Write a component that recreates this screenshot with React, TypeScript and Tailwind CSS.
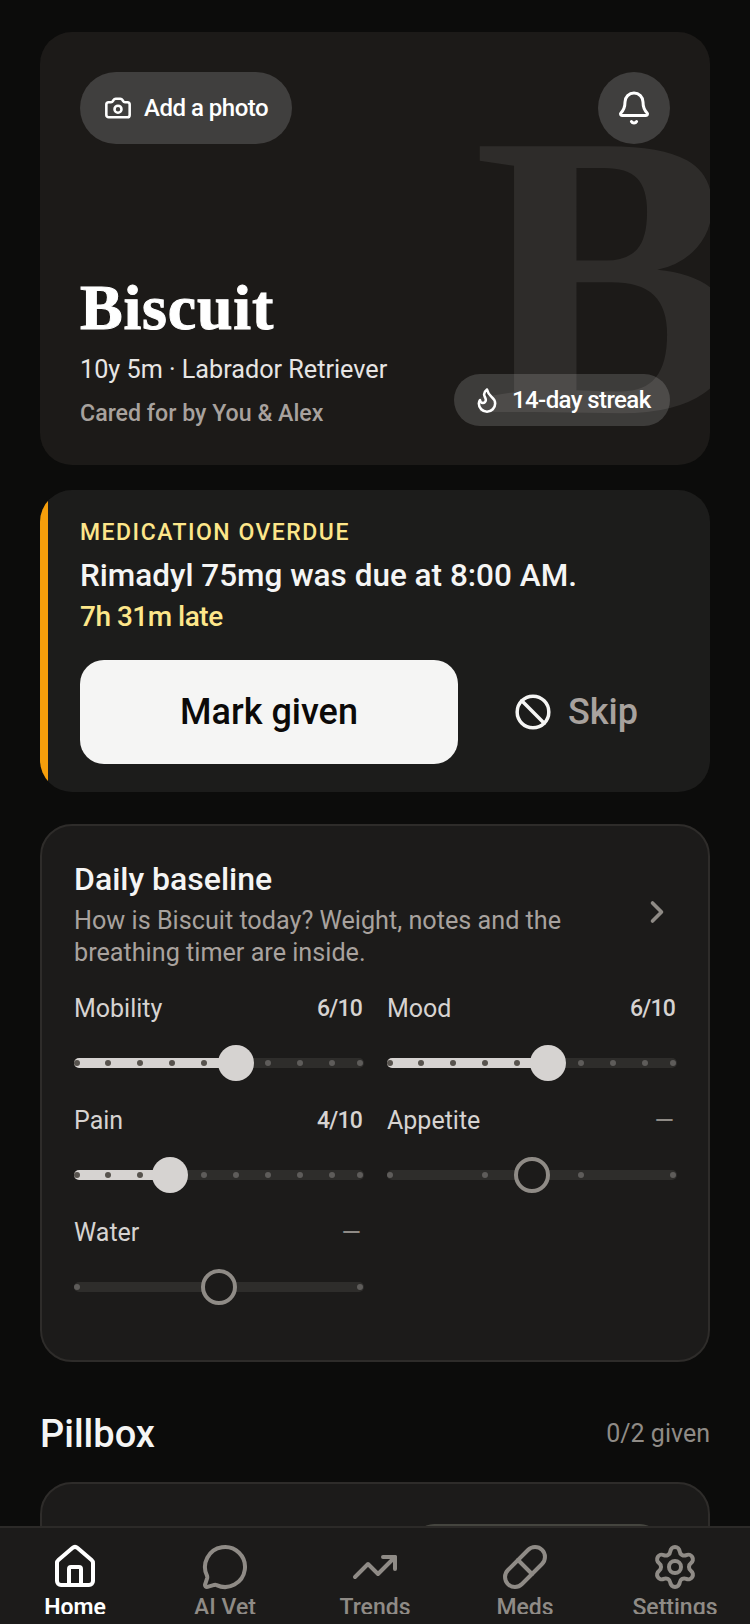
import { Ban, Bell, Camera, ChevronRight, Flame, House, MessageCircle, Pill, Settings, TrendingUp } from "lucide-react";

const sans = "font-['Roboto',sans-serif]";

type Row = { label: string; value: string; pos: number | null; thumb: number; dots: number[] };

const rows: Row[] = [
  { label: "Mobility", value: "6/10", pos: 5, thumb: 162, dots: [0, 1, 2, 3, 4, 6, 7, 8, 9] },
  { label: "Mood", value: "6/10", pos: 5, thumb: 161, dots: [0, 1, 2, 3, 4, 6, 7, 8, 9] },
  { label: "Pain", value: "4/10", pos: 3, thumb: 96, dots: [0, 1, 2, 4, 5, 6, 7, 8, 9] },
  { label: "Appetite", value: "—", pos: null, thumb: 145, dots: [0, 3, 6, 9] },
  { label: "Water", value: "—", pos: null, thumb: 145, dots: [0, 9] },
];

function Slider({ row }: { row: Row }) {
  const set = row.pos !== null;
  return (
    <div className="flex flex-col gap-[20px]">
      <div className={`flex h-8 items-center justify-between ${set ? "pr-[2px]" : "pr-[3px]"}`}>
        <span className="text-[25px] text-[#d6d3d1]">{row.label}</span>
        <span className={set ? "text-[23px] font-medium tracking-[-0.8px] text-[#d6d3d1]" : "text-[25px] text-[#8f8b86]"}>{row.value}</span>
      </div>
      <div className="relative h-[36px] w-[290px]">
        <div className="absolute left-0 right-0 top-[13px] h-[10px] overflow-hidden rounded-full bg-[#2e2d2b]">
          {set && <div className="h-full bg-[#d6d3d1]" style={{ width: row.thumb }} />}
        </div>
        {row.dots.map((d) => (
          <span
            key={d}
            className={`absolute top-[15px] h-[6px] w-[6px] rounded-full ${set && d < row.pos! ? "bg-[#57534e]" : "bg-[#5e5c5a]"}`}
            style={{ left: Math.min(Math.max(d * 32 - 1, 0), 283) }}
          />
        ))}
        {set ? (
          <span className="absolute top-0 h-9 w-9 rounded-full bg-[#d6d3d1]" style={{ left: row.thumb - 18 }} />
        ) : (
          <span className="absolute top-0 h-9 w-9 rounded-full border-[4px] border-[#8f8b86] bg-[#1c1b1a]" style={{ left: row.thumb - 18 }} />
        )}
      </div>
    </div>
  );
}

const nav = [
  { label: "Home", Icon: House, active: true },
  { label: "AI Vet", Icon: MessageCircle },
  { label: "Trends", Icon: TrendingUp },
  { label: "Meds", Icon: Pill },
  { label: "Settings", Icon: Settings },
];

export default function App() {
  return (
    <div className={`relative h-[1624px] w-[750px] overflow-hidden bg-[#0c0c0b] ${sans}`}>
      <main className="flex flex-col px-10 pt-8">
        <section className="relative flex h-[433px] flex-col justify-between overflow-hidden rounded-[32px] bg-[#1c1a18] px-10 pt-10 pb-9">
          <span className="absolute left-[433px] top-[40px] font-['Liberation_Serif',serif] text-[406px] font-bold leading-[1] text-[#2e2c2a]">B</span>
          <div className="relative flex items-center justify-between">
            <div className="flex h-[72px] w-[212px] items-center gap-3 rounded-full bg-[#403f3e] pl-6 text-[24px] font-medium leading-[74px] tracking-[-0.5px] text-white">
              <Camera size={28} strokeWidth={2.2} />
              <span>Add a photo</span>
            </div>
            <div className="flex h-[72px] w-[72px] items-center justify-center rounded-full bg-[#403f3e] text-white">
              <Bell size={36} strokeWidth={2} />
            </div>
          </div>
          <div className="relative flex items-end justify-between">
            <div>
              <h1 className="font-['Liberation_Serif',serif] text-[64px] font-bold leading-[72px] tracking-[0.8px] text-white [-webkit-text-stroke:1px_white]">Biscuit</h1>
              <p className="mt-[10px] text-[25.2px] leading-8 text-[#e7e5e4]">10y 5m · Labrador Retriever</p>
              <p className="mt-[11px] text-[23.2px] font-medium leading-8 text-[#a8a29e]">Cared for by You &amp; Alex</p>
            </div>
            <div className="mb-[3px] flex h-[52px] w-[216px] items-center gap-[11px] rounded-full bg-white/15 pl-[19px] text-[24px] font-medium tracking-[-0.6px] text-white">
              <Flame size={28} strokeWidth={2.2} />
              <span>14-day streak</span>
            </div>
          </div>
        </section>

        <section className="mt-[25px] flex h-[302px] overflow-hidden rounded-[32px] bg-[#1c1c1b]">
          <div className="w-2 shrink-0 bg-[#f59e0b]" />
          <div className="flex-1 pl-8 pt-[29px]">
            <p className="text-[23px] font-medium uppercase leading-7 tracking-[1.5px] text-[#fde68a]">Medication overdue</p>
            <p className="mt-[11px] text-[31.5px] font-medium leading-9 text-[#f5f5f4]">Rimadyl 75mg was due at 8:00 AM.</p>
            <p className="mt-[5px] text-[28px] font-medium leading-9 tracking-[-0.5px] text-[#fde68a]">7h 31m late</p>
            <div className="mt-[25px] flex items-center">
              <button className="h-[104px] w-[378px] rounded-[24px] bg-[#f5f5f4] text-[36px] font-medium text-[#0c0a09]">Mark given</button>
              <div className="flex flex-1 items-center justify-center gap-4 pr-4 text-[36px] font-medium text-[#a8a29e]">
                <Ban size={38} strokeWidth={2.2} className="text-[#f5f5f4]" />
                <span>Skip</span>
              </div>
            </div>
          </div>
        </section>

        <section className="mt-[32px] h-[538px] rounded-[32px] border-2 border-[#2e2c2a] bg-[#1c1b1a] pl-8 pr-[30px] pt-[35px]">
          <div className="flex items-center justify-between">
            <div className="w-[520px]">
              <h2 className="text-[32px] font-medium leading-9 text-[#f5f5f4]">Daily baseline</h2>
              <p className="mt-[8px] text-[25.2px] leading-8 text-[#a8a29e]">How is Biscuit today? Weight, notes and the breathing timer are inside.</p>
            </div>
            <ChevronRight size={36} strokeWidth={2.4} className="mb-[6px] mr-[3px] text-[#8f8b86]" />
          </div>
          <div className="mt-[24px] grid grid-cols-[290px_290px] gap-x-[23px] gap-y-[24px]">
            {rows.map((r) => (
              <Slider key={r.label} row={r} />
            ))}
          </div>
        </section>

        <div className="mt-[50px] flex items-center justify-between">
          <h2 className="text-[38px] font-medium leading-[44px] text-[#f5f5f4]">Pillbox</h2>
          <span className="text-[25px] text-[#8f8b86]">0/2 given</span>
        </div>

        <section className="relative mt-[26px] h-[300px] rounded-[32px] border-2 border-[#2e2c2a] bg-[#1c1b1a]">
          <div className="absolute left-[372px] top-[40px] h-[60px] w-[246px] rounded-[20px] bg-[#45453f]" />
        </section>
      </main>

      <nav className="absolute bottom-0 left-0 right-0 grid h-[98px] grid-cols-5 border-t-2 border-[#2c2a28] bg-[#1c1b1a] pt-[15px]">
        {nav.map(({ label, Icon, active }) => (
          <div key={label} className={`flex flex-col items-center ${active ? "text-white" : "text-[#8f8b86]"}`}>
            <Icon size={48} strokeWidth={2} />
            <span className={`h-[23px] overflow-hidden text-[23px] leading-[33px] ${active ? "font-semibold" : "font-medium"}`}>{label}</span>
          </div>
        ))}
      </nav>
    </div>
  );
}
